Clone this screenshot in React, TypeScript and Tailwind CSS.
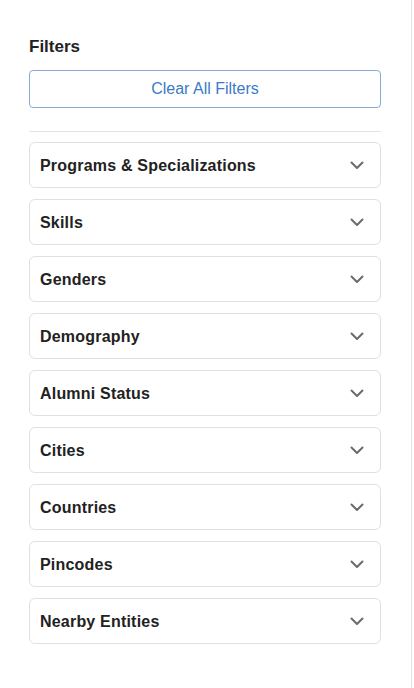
import React from 'react';

const sections = [
    'Programs & Specializations',
    'Skills',
    'Genders',
    'Demography',
    'Alumni Status',
    'Cities',
    'Countries',
    'Pincodes',
    'Nearby Entities',
];

const Chevron: React.FC = () => (
    <svg width="14" height="9" viewBox="0 0 14 9" fill="none" className="shrink-0">
        <path d="M1.5 1.5 L7 7 L12.5 1.5" stroke="#6b6b6b" strokeWidth="2" strokeLinecap="round" strokeLinejoin="round" />
    </svg>
);

const App: React.FC = () => {
    return (
        <div className="w-[414px] h-[688px] bg-white font-['Liberation_Sans',Arial,sans-serif]">
            <div className="w-[412px] h-full border-r border-[#e3e3e3] pl-[29px] pr-[30px] pt-[34px]">
                <h2 className="text-[17px] leading-[25px] font-bold text-[#222]">Filters</h2>

                <button
                    type="button"
                    className="mt-[11px] w-full h-[38px] rounded-[4px] border border-[#86abd8] text-[16px] text-[#3b7bc4] bg-white"
                >
                    Clear All Filters
                </button>

                <div className="mt-[23px] h-px bg-[#e3e3e3]" />

                <div className="mt-[10px] flex flex-col gap-[11px]">
                    {sections.map((name) => (
                        <div
                            key={name}
                            className="h-[46px] rounded-[6px] border border-[#e0e0e0] flex items-center justify-between pl-[10px] pr-[16px]"
                        >
                            <span className="pt-[2px] text-[16px] font-bold text-[#222] tracking-[0.2px]">{name}</span>
                            <Chevron />
                        </div>
                    ))}
                </div>
            </div>
        </div>
    );
};

export default App;
